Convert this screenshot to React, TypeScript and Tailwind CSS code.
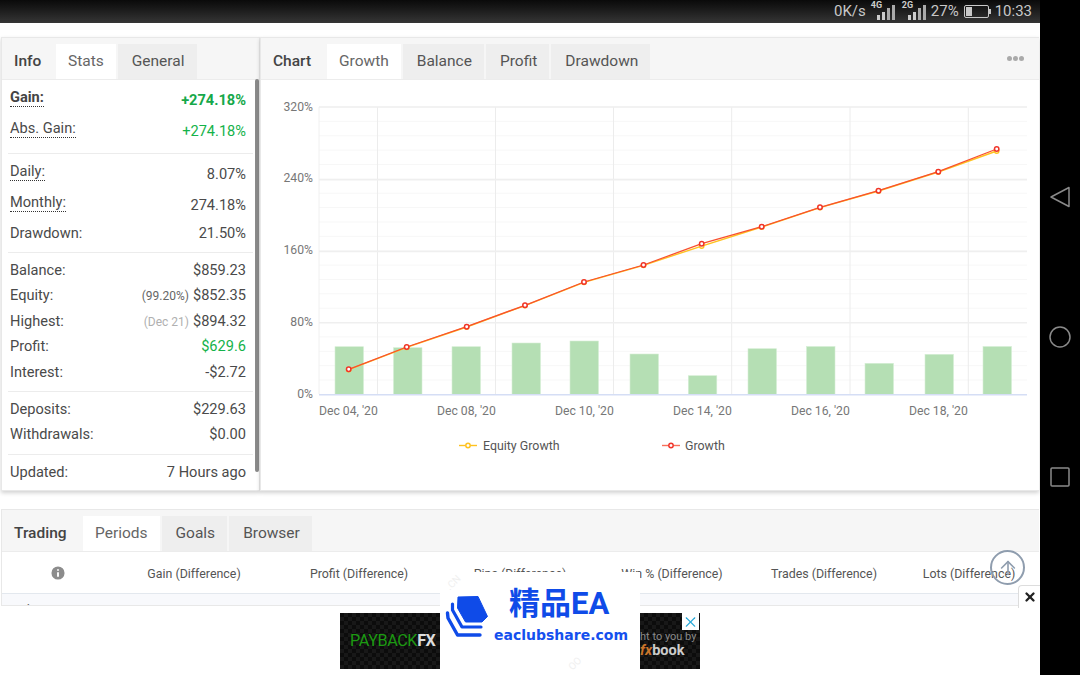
import { Info, ArrowUp, X } from 'lucide-react'

const font = "font-['Roboto','Noto_Sans_CJK_SC',sans-serif]"

function Tabs({ title, titleWidth, tabs, active }: { title: string; titleWidth: string; tabs: string[]; active: string }) {
    return (
        <div className="flex h-[42px] items-end border-b border-[#ececec] bg-[#f6f6f6] text-[15.5px] text-[#555]">
            <div className={`flex h-[35px] items-center pl-[12px] pt-[1px] font-medium text-[#444] ${titleWidth}`}>{title}</div>
            <div className="flex gap-[2px]">
                {tabs.map((t) => (
                    <div
                        key={t}
                        className={
                            t === active
                                ? '-mb-px flex h-[35px] items-center bg-white px-[12px] text-[#666]'
                                : 'flex h-[35px] items-center bg-[#eeeeee] pl-[14px] pr-[12px] pt-[1px]'
                        }
                    >
                        {t}
                    </div>
                ))}
            </div>
        </div>
    )
}

function Row({
    label,
    value,
    dotted,
    bold,
    green,
    low,
    note,
    h,
}: {
    label: string
    value: string
    dotted?: boolean
    bold?: boolean
    green?: boolean
    low?: boolean
    note?: React.ReactNode
    h: string
}) {
    return (
        <div className={`flex items-center justify-between ${h}`}>
            <span
                className={`${dotted ? 'border-b border-dotted border-[#333] leading-[18px] -mt-[3px]' : ''} ${
                    bold ? 'font-bold text-[#444]' : ''
                }`}
            >
                {label}
            </span>
            <span
                className={`${green ? 'text-[#14b24a]' : ''} ${bold ? 'font-bold text-[#16a84a]' : ''} ${
                    low ? 'pt-[4px]' : ''
                }`}
            >
                {note}
                {value}
            </span>
        </div>
    )
}

function StatsPanel() {
    return (
        <div className="relative h-[454px] w-[259px] shrink-0 border border-[#e8e8e8] bg-white shadow-[0_2px_4px_rgba(0,0,0,0.18)]">
            <Tabs title="Info" titleWidth="w-[54px]" tabs={['Stats', 'General']} active="Stats" />
            <div className="absolute left-[253px] top-[41px] h-[393px] w-[4px] rounded-sm bg-[#8a8a8a]" />
            <div className="pl-[8px] pr-[13px] pt-[3px] text-[14.6px] text-[#4a4a4a]">
                <Row h="h-[31px]" label="Gain:" value="+274.18%" dotted bold low />
                <Row h="h-[31px]" label="Abs. Gain:" value="+274.18%" dotted green low />
            </div>
            <div className="mx-[6px] mt-[8px] border-t border-[#ececec]" />
            <div className="pl-[8px] pr-[13px] pt-[3px] text-[14.6px] text-[#4a4a4a]">
                <Row h="h-[31px]" label="Daily:" value="8.07%" dotted low />
                <Row h="h-[31px]" label="Monthly:" value="274.18%" dotted low />
                <Row h="h-[29px]" label="Drawdown:" value="21.50%" />
            </div>
            <div className="mx-[6px] mt-[4px] border-t border-[#ececec]" />
            <div className="pl-[8px] pr-[13px] pt-[5px] text-[14.6px] text-[#4a4a4a]">
                <Row h="h-[25.5px]" label="Balance:" value="$859.23" />
                <Row
                    h="h-[25.5px]"
                    label="Equity:"
                    value="$852.35"
                    note={<span className="mr-[4px] text-[12px] text-[#666]">(99.20%)</span>}
                />
                <Row
                    h="h-[25.5px]"
                    label="Highest:"
                    value="$894.32"
                    note={<span className="mr-[4px] text-[12px] text-[#b0b0b0]">(Dec 21)</span>}
                />
                <Row h="h-[25.5px]" label="Profit:" value="$629.6" green />
                <Row h="h-[25.5px]" label="Interest:" value="-$2.72" />
            </div>
            <div className="mx-[6px] mt-[5.5px] border-t border-[#ececec]" />
            <div className="pl-[8px] pr-[13px] pt-[5px] text-[14.6px] text-[#4a4a4a]">
                <Row h="h-[25.5px]" label="Deposits:" value="$229.63" />
                <Row h="h-[25.5px]" label="Withdrawals:" value="$0.00" />
            </div>
            <div className="mx-[6px] mt-[6px] border-t border-[#ececec]" />
            <div className="pl-[8px] pr-[13px] pt-[5px] text-[14.6px] text-[#4a4a4a]">
                <Row h="h-[25.5px]" label="Updated:" value="7 Hours ago" />
            </div>
        </div>
    )
}

// chart data, in page pixels minus the svg origin (261, 80)
const OX = 261
const OY = 80
const bars: [number, number][] = [
    [335, 346.7],
    [393.5, 347.7],
    [452, 346.7],
    [512, 343],
    [570, 341],
    [630, 354],
    [688.3, 375.7],
    [748, 348.7],
    [806.5, 346.5],
    [865, 363.3],
    [925, 354.3],
    [983, 346.5],
]
const growth: [number, number][] = [
    [348.7, 369.3],
    [406.7, 347],
    [466.7, 326.7],
    [525, 305.3],
    [584, 282],
    [643.5, 265],
    [701.7, 243.7],
    [761.7, 226.7],
    [820, 207.3],
    [878.5, 190.7],
    [938.3, 171.7],
    [996.7, 149],
]
const equity = growth.map(([x, y], i): [number, number] => [x, i === 6 ? y + 2.4 : i === 11 ? y + 2 : y + 0.3])
const verticals = [377.5, 495.5, 613.5, 731.7, 850, 968.3]
const majors: [number, number, string][] = [
    [107, 111.3, '320%'],
    [179.8, 182.3, '240%'],
    [251.5, 254.3, '160%'],
    [322.7, 326.3, '80%'],
]
const dates: [number, string][] = [
    [319, "Dec 04, '20"],
    [437, "Dec 08, '20"],
    [555, "Dec 10, '20"],
    [673, "Dec 14, '20"],
    [791, "Dec 16, '20"],
    [909, "Dec 18, '20"],
]
const toPoints = (pts: [number, number][]) => pts.map(([x, y]) => `${x - OX},${y - OY}`).join(' ')

function GrowthChart() {
    const minors: number[] = []
    for (let y = 107; y < 394; y += 14.37) minors.push(y)
    return (
        <svg width="778" height="411" className="block" fontFamily="Roboto, sans-serif">
            {minors.map((y) => (
                <line key={y} x1={319 - OX} x2={1027 - OX} y1={y - OY} y2={y - OY} stroke="#f7f7f7" />
            ))}
            {verticals.map((x) => (
                <line key={x} x1={x - OX} x2={x - OX} y1={107 - OY} y2={394 - OY} stroke="#ececec" />
            ))}
            <line x1={319 - OX} x2={319 - OX} y1={107 - OY} y2={394 - OY} stroke="#f0f0f0" />
            {majors.map(([y, labelY, t]) => (
                <g key={t}>
                    <line x1={319 - OX} x2={1027 - OX} y1={y - OY} y2={y - OY} stroke="#efefef" strokeWidth="1.4" />
                    <text x={313 - OX} y={labelY - OY} textAnchor="end" fontSize="12.2" fill="#777">
                        {t}
                    </text>
                </g>
            ))}
            <text x={313 - OX} y={398.3 - OY} textAnchor="end" fontSize="12.2" fill="#777">
                0%
            </text>
            {bars.map(([x, top]) => (
                <rect
                    key={x}
                    x={x - OX}
                    y={top - OY}
                    width="28.5"
                    height={394.5 - top}
                    fill="#b5dfb4"
                    stroke="#d6eed5"
                    strokeWidth="0.6"
                />
            ))}
            <line x1={319 - OX} x2={1027 - OX} y1={394.8 - OY} y2={394.8 - OY} stroke="#d5def5" strokeWidth="1.6" />
            {dates.map(([x, t]) => (
                <text key={t} x={x - OX} y={415 - OY} fontSize="12.2" fill="#777">
                    {t}
                </text>
            ))}
            <polyline points={toPoints(equity)} fill="none" stroke="#ffc21f" strokeWidth="1.4" />
            {equity.map(([x, y]) => (
                <circle key={x} cx={x - OX} cy={y - OY} r="2.2" fill="#fff" stroke="#ffc21f" strokeWidth="1.4" />
            ))}
            <polyline points={toPoints(growth)} fill="none" stroke="#f8502f" strokeWidth="1.3" />
            {growth.map(([x, y]) => (
                <circle key={x} cx={x - OX} cy={y - OY} r="2.2" fill="#fff" stroke="#f0342a" strokeWidth="1.5" />
            ))}
            <line x1={459 - OX} x2={477 - OX} y1={445.5 - OY} y2={445.5 - OY} stroke="#ffc21f" strokeWidth="1.4" />
            <circle cx={468 - OX} cy={445.5 - OY} r="2.2" fill="#fff" stroke="#ffc21f" strokeWidth="1.4" />
            <text x={483 - OX} y={449.5 - OY} fontSize="12.4" fill="#555">
                Equity Growth
            </text>
            <line x1={662 - OX} x2={680 - OX} y1={445.5 - OY} y2={445.5 - OY} stroke="#f8705a" strokeWidth="1.4" />
            <circle cx={671 - OX} cy={445.5 - OY} r="2.2" fill="#fff" stroke="#f0342a" strokeWidth="1.4" />
            <text x={685 - OX} y={449.5 - OY} fontSize="12.4" fill="#555">
                Growth
            </text>
        </svg>
    )
}

function ChartPanel() {
    return (
        <div className="relative h-[454px] flex-1 border-y border-l border-[#e8e8e8] bg-white shadow-[0_2px_4px_rgba(0,0,0,0.18)]">
            <Tabs title="Chart" titleWidth="w-[66px]" tabs={['Growth', 'Balance', 'Profit', 'Drawdown']} active="Growth" />
            <div className="absolute right-[15px] top-[18px] flex gap-[1px]">
                <span className="size-[5px] rounded-full bg-[#aaa]" />
                <span className="size-[5px] rounded-full bg-[#aaa]" />
                <span className="size-[5px] rounded-full bg-[#aaa]" />
            </div>
            <GrowthChart />
        </div>
    )
}

function TradingPanel() {
    return (
        <div className="mt-[18px] h-[97px] overflow-hidden border-y border-l border-[#e8e8e8] bg-white">
            <Tabs title="Trading" titleWidth="w-[81px]" tabs={['Periods', 'Goals', 'Browser']} active="Periods" />
            <div className="grid h-[42px] grid-cols-[111px_162px_168px_154px_150px_154px_136px] items-center border-b border-[#e3e8ee] pt-[3px] text-center text-[12.4px] text-[#555]">
                <div className="-mt-[2px] flex justify-center">
                    <Info size={18} fill="#8c8c8c" color="#fff" strokeWidth={2.5} />
                </div>
                <div>Gain (Difference)</div>
                <div>Profit (Difference)</div>
                <div>Pips (Difference)</div>
                <div>Win % (Difference)</div>
                <div>Trades (Difference)</div>
                <div>Lots (Difference)</div>
            </div>
            <div className="h-[20px] bg-[#f8f9fc] pl-[6px] pt-[6px] text-[13px] text-[#666]">Today</div>
        </div>
    )
}

function Signal({ label }: { label: string }) {
    return (
        <span className="relative flex h-[16px] w-[24px] items-end justify-end gap-[2.5px]">
            <span className="absolute left-0 top-[-3px] text-[9px] font-bold leading-none text-[#ccc]">{label}</span>
            <span className="h-[5px] w-[2.5px] bg-[#ccc]" />
            <span className="h-[8px] w-[2.5px] bg-[#ccc]" />
            <span className="h-[12px] w-[2.5px] bg-[#aaa]" />
            <span className="h-[15px] w-[2.5px] bg-[#aaa]" />
        </span>
    )
}

function StatusBar() {
    return (
        <div className="flex h-[23px] items-center justify-end bg-gradient-to-b from-[#0a0a0a] to-[#363636] pr-[8px] text-[15px] text-[#c8c8c8]">
            <span>0K/s</span>
            <span className="ml-[5px]">
                <Signal label="4G" />
            </span>
            <span className="ml-[7px]">
                <Signal label="2G" />
            </span>
            <span className="ml-[5px]">27%</span>
            <span className="relative ml-[5px] flex h-[13px] w-[25px] items-center rounded-[2px] border border-[#c8c8c8] p-[1px]">
                <span className="h-full w-[6px] bg-[#c8c8c8]" />
                <span className="absolute -right-[3px] h-[5px] w-[2px] bg-[#c8c8c8]" />
            </span>
            <span className="ml-[6px]">10:33</span>
        </div>
    )
}

function AdBar() {
    return (
        <div className="absolute bottom-0 left-0 flex h-[68px] w-[1040px] justify-center bg-white pt-[6px]">
            <div className="flex h-[56px] w-[360px] items-center justify-between bg-[repeating-conic-gradient(#181818_0%_25%,#0c0c0c_0%_50%)] bg-[length:8px_8px] text-[16.2px]">
                <span className="pl-[10px] tracking-[-0.4px] text-[#1c9a12]">
                    PAYBACK<span className="font-bold text-[#ddd]">FX</span>
                </span>
                <div className="w-[60px] pt-[8px] leading-none">
                    <div className="whitespace-nowrap text-[11px] text-[#8a8a8a]">ht to you by</div>
                    <div className="mt-[2px] text-[14.5px] font-bold text-[#ccc]">
                        <span className="italic text-[#c8742a]">fx</span>book
                    </div>
                </div>
            </div>
        </div>
    )
}

function Watermark() {
    return (
        <div className="absolute bottom-0 left-[440px] h-[103px] w-[200px] overflow-hidden bg-white">
            <span className="absolute left-[5px] top-[3px] -rotate-45 text-[10px] text-[#f0f0f0]">.CN</span>
            <span className="absolute left-[128px] top-[84px] -rotate-45 text-[10px] text-[#f0f0f0]">OO</span>
            <svg className="absolute left-[5px] top-[23px]" width="45" height="45" viewBox="0 0 45 45">
                <path
                    d="M13 2 L33 1.5 L42.5 21.5 L37 27 L20.5 27 L12.5 13 Z"
                    fill="#0f4be8"
                    stroke="#0f4be8"
                    strokeWidth="1"
                    strokeLinejoin="round"
                />
                <path d="M7.5 9 L7.5 15 L17 32 L36 32" fill="none" stroke="#0f4be8" strokeWidth="3.2" strokeLinecap="round" strokeLinejoin="round" />
                <path d="M2.5 18 L3 23 L12.5 40 L35 40" fill="none" stroke="#0f4be8" strokeWidth="3.4" strokeLinecap="round" strokeLinejoin="round" />
            </svg>
            <div className="absolute left-[69px] top-[10px] whitespace-nowrap text-[31px] font-bold leading-[44px] text-[#0f4be8]">
                精品EA
            </div>
            <div className="absolute left-[54px] top-[53px] whitespace-nowrap font-['DejaVu_Sans'] text-[14px] font-bold leading-[20px] text-[#1450ee]">
                eaclubshare.com
            </div>
        </div>
    )
}

function NavBar() {
    return (
        <div className="flex w-[40px] shrink-0 flex-col items-center bg-black pt-[186px]">
            <svg width="22" height="22" viewBox="0 0 22 22">
                <path d="M20 1.5 L20 20.5 L2 11 Z" fill="none" stroke="#8a8a8a" strokeWidth="1.5" strokeLinejoin="round" />
            </svg>
            <svg className="mt-[118px]" width="22" height="22" viewBox="0 0 22 22">
                <circle cx="11" cy="11" r="10" fill="none" stroke="#8a8a8a" strokeWidth="1.5" />
            </svg>
            <svg className="mt-[118px]" width="22" height="22" viewBox="0 0 22 22">
                <rect x="2" y="2" width="18" height="18" rx="1" fill="none" stroke="#8a8a8a" strokeWidth="1.5" />
            </svg>
        </div>
    )
}

export default function App() {
    return (
        <div className={`${font} relative flex h-[675px] w-[1080px] overflow-hidden bg-white`}>
            <div className="relative w-[1040px] shrink-0">
                <StatusBar />
                <div className="pl-px pr-px pt-[14px]">
                    <div className="flex">
                        <StatsPanel />
                        <ChartPanel />
                    </div>
                    <TradingPanel />
                </div>
                <AdBar />
                <Watermark />
                <div className="absolute left-[682px] top-[613px] flex size-[17px] items-center justify-center bg-white text-[#29a9d8]">
                    <X size={18} strokeWidth={1.5} />
                </div>
                <div className="absolute left-[990px] top-[550px] flex size-[35px] items-center justify-center rounded-full border-2 border-[#8f9dae] text-[#8f9dae]">
                    <ArrowUp size={22} strokeWidth={1.75} />
                </div>
                <div className="absolute left-[1018px] top-[585px] flex h-[23px] w-[22px] items-center justify-center rounded-tl-[4px] border-l border-t border-[#ddd] bg-white text-[#222]">
                    <X size={14} strokeWidth={4} />
                </div>
            </div>
            <NavBar />
        </div>
    )
}
